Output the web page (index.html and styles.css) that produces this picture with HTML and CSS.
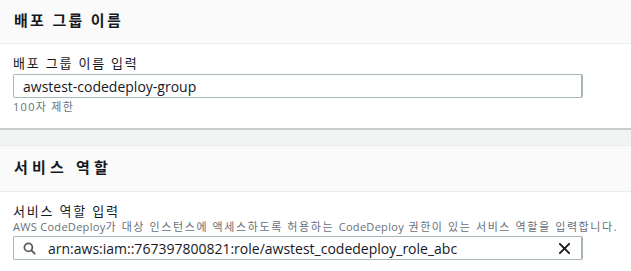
FILE: index.html
```html
<!DOCTYPE html>
<html lang="ko">
<head>
<meta charset="utf-8">
<link rel="stylesheet" href="styles.css">
</head>
<body>
<div class="page">
  <section class="panel">
    <div class="panel-header"><h2 class="title-name">배포 그룹 이름</h2></div>
    <div class="panel-body first">
      <label class="label">배포 그룹 이름 입력</label>
      <div class="input"><span class="value">awstest-codedeploy-group</span></div>
      <div class="hint">100자 제한</div>
    </div>
  </section>
  <div class="gap"></div>
  <section class="panel">
    <div class="panel-header second"><h2 class="title-role">서비스 역할</h2></div>
    <div class="panel-body second">
      <label class="label">서비스 역할 입력</label>
      <div class="desc"><span class="en">AWS CodeDeploy</span>가 대상 인스턴스에 액세스하도록 허용하는 <span class="en">CodeDeploy</span> 권한이 있는 서비스 역할을 입력합니다.</div>
      <div class="input search">
        <svg class="icon-search" width="13" height="13" viewBox="0 0 14 14"><circle cx="5.8" cy="5.8" r="4.3" fill="none" stroke="#545b64" stroke-width="1.9"/><line x1="9" y1="9" x2="12.6" y2="12.6" stroke="#545b64" stroke-width="2" stroke-linecap="round"/></svg>
        <span class="value">arn:aws:iam::767397800821:role/awstest_codedeploy_role_abc</span>
        <svg class="icon-x" width="13" height="13" viewBox="0 0 14 14"><path d="M2 2 L12 12 M12 2 L2 12" stroke="#16191f" stroke-width="2" stroke-linecap="round"/></svg>
      </div>
    </div>
  </section>
</div>
</body>
</html>
```
FILE: styles.css
```css
html, body {
  margin: 0;
  padding: 0;
  background: #ffffff;
}
body {
  font-family: "Open Sans", "Noto Sans CJK KR", sans-serif;
  color: #16191f;
  width: 631px;
  height: 271px;
  overflow: hidden;
}
.panel {
  background: #ffffff;
}
.panel-header {
  background: #fafafa;
  height: 44px;
  box-sizing: border-box;
  border-bottom: 1px solid #eaeded;
  display: flex;
  align-items: center;
  padding: 0 14px 4px 14px;
}
.panel-header.second {
  height: 47px;
  border-top: 1px solid #eaeded;
}
.panel-header h2 {
  margin: 0;
  font-size: 15px;
  font-weight: 700;
  color: #16191f;
  letter-spacing: 2.3px;
}
.panel-header h2.title-role {
  letter-spacing: 4.2px;
}
.panel-body {
  padding: 9px 13px 0;
  display: flex;
  flex-direction: column;
}
.panel-body.first {
  height: 75px;
  border-bottom: 2px solid #c9cdd0;
}
.panel-body.second {
  padding-top: 11px;
}
.label {
  font-size: 13px;
  line-height: 20px;
  color: #16191f;
  margin-bottom: 1px;
  letter-spacing: 1.8px;
}
.panel-body.second .label {
  line-height: 17px;
  margin-bottom: 0;
}
.desc {
  font-size: 11px;
  line-height: 13px;
  color: #687078;
  margin-bottom: 3px;
  white-space: nowrap;
  letter-spacing: 1.6px;
}
.desc .en {
  letter-spacing: 0.3px;
}
.hint {
  font-size: 11px;
  line-height: 14px;
  color: #687078;
  margin-top: 2px;
  letter-spacing: 1.3px;
}
.input {
  width: 570px;
  height: 24px;
  box-sizing: border-box;
  border: 1px solid #aab7b8;
  border-right-width: 2px;
  border-radius: 2px;
  display: flex;
  align-items: center;
  padding: 0 9px;
  font-size: 14px;
  color: #16191f;
}
.input.search {
  padding: 0 10px 0 9px;
}
.icon-search {
  margin-right: 12px;
  flex: none;
}
.input.search .value {
  flex: 1;
}
.icon-x {
  flex: none;
}
.gap {
  height: 15px;
  background: #f2f3f3;
}
```
